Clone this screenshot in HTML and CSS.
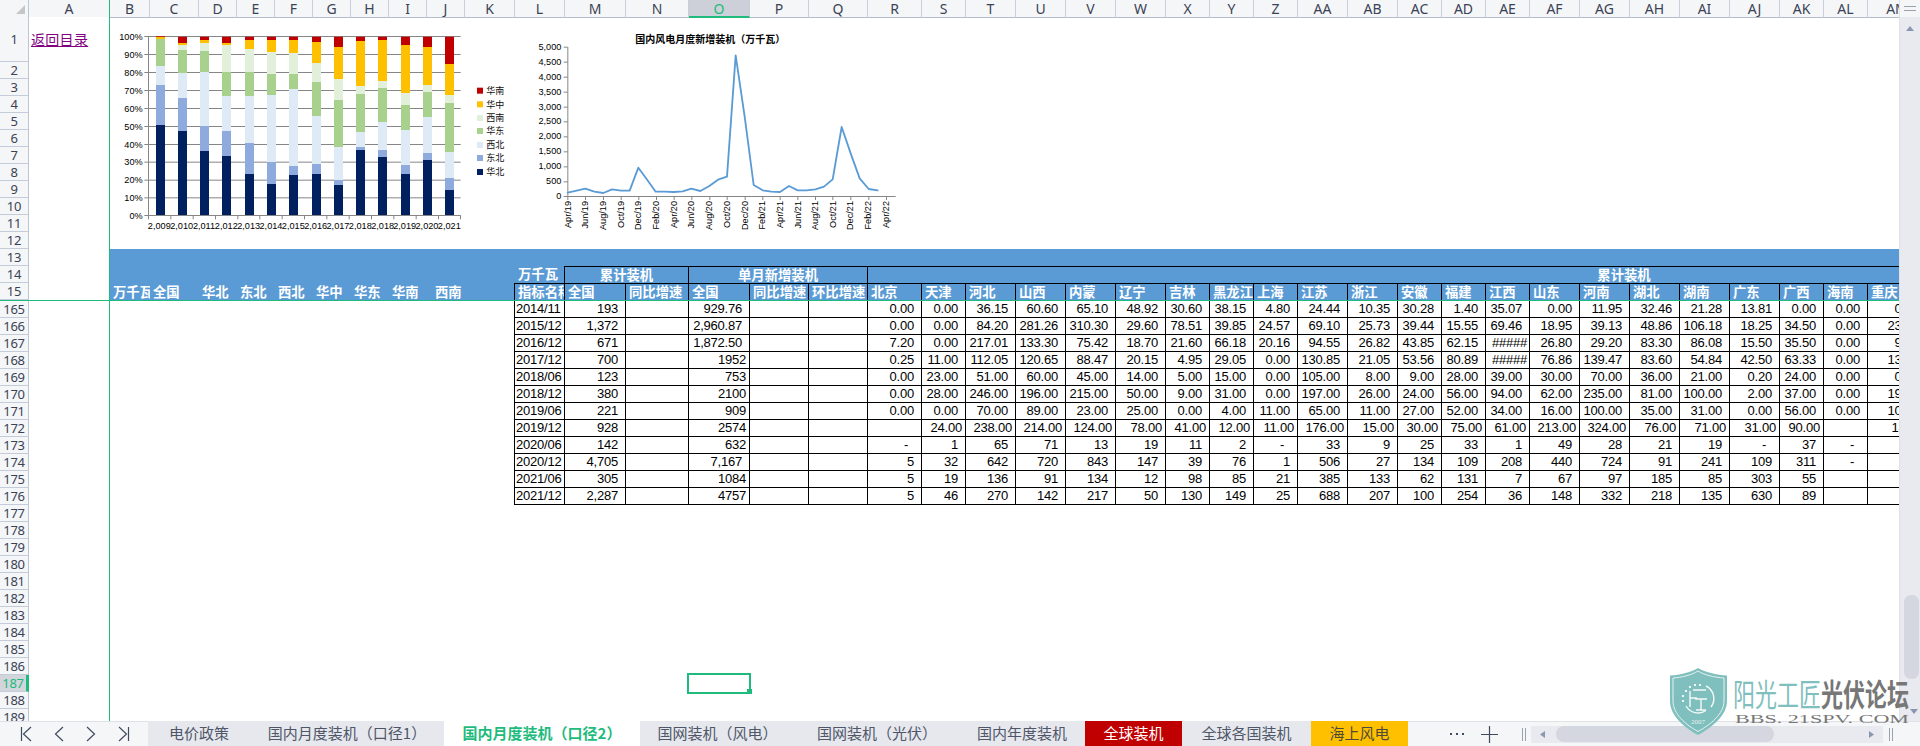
FILE: index.html
```html
<!DOCTYPE html>
<html lang="zh-CN">
<head>
<meta charset="utf-8">
<title>国内月度装机</title>
<link rel="stylesheet" href="styles.css">
</head>
<body>
<div class="workspace">
  <div class="sheet">
    <div class="row colhead">
      <div class="corner"><svg width="29" height="17" viewBox="0 0 29 17"><path class="corner-mark" d="M25 5V14H16Z"/></svg></div>
      <div class="ch cha">A</div><div class="ch">B</div><div class="ch">C</div><div class="ch">D</div><div class="ch">E</div><div class="ch">F</div><div class="ch">G</div><div class="ch">H</div><div class="ch">I</div><div class="ch">J</div><div class="ch">K</div><div class="ch">L</div><div class="ch">M</div><div class="ch">N</div><div class="ch on">O</div><div class="ch">P</div><div class="ch">Q</div><div class="ch">R</div><div class="ch">S</div><div class="ch">T</div><div class="ch">U</div><div class="ch">V</div><div class="ch">W</div><div class="ch">X</div><div class="ch">Y</div><div class="ch">Z</div><div class="ch">AA</div><div class="ch">AB</div><div class="ch">AC</div><div class="ch">AD</div><div class="ch">AE</div><div class="ch">AF</div><div class="ch">AG</div><div class="ch">AH</div><div class="ch">AI</div><div class="ch">AJ</div><div class="ch">AK</div><div class="ch">AL</div><div class="ch">AM</div>
    </div>

    <div class="row tall"><div class="rh">1</div><div class="a"><a class="link" href="#">返回目录</a></div></div>
    <div class="row"><div class="rh">2</div><div class="a"></div></div>
    <div class="row"><div class="rh">3</div><div class="a"></div></div>
    <div class="row"><div class="rh">4</div><div class="a"></div></div>
    <div class="row"><div class="rh">5</div><div class="a"></div></div>
    <div class="row"><div class="rh">6</div><div class="a"></div></div>
    <div class="row"><div class="rh">7</div><div class="a"></div></div>
    <div class="row"><div class="rh">8</div><div class="a"></div></div>
    <div class="row"><div class="rh">9</div><div class="a"></div></div>
    <div class="row"><div class="rh">10</div><div class="a"></div></div>
    <div class="row"><div class="rh">11</div><div class="a"></div></div>
    <div class="row"><div class="rh">12</div><div class="a"></div></div>
    <div class="row band"><div class="rh">13</div><div class="a"></div></div>
    <div class="row band"><div class="rh">14</div><div class="a"></div>
      <div class="h14 l14">万千瓦</div>
      <div class="h14 box cm">累计装机</div>
      <div class="h14 box co">单月新增装机</div>
      <div class="h14 box cr">累计装机</div>
    </div>
    <div class="row band last"><div class="rh">15</div><div class="a"></div>
      <div class="lab">万千瓦</div><div class="lab">全国</div><div class="lab">华北</div><div class="lab">东北</div><div class="lab">西北</div><div class="lab">华中</div><div class="lab">华东</div><div class="lab">华南</div><div class="lab far">西南</div>
      <div class="h15 first">指标名称</div><div class="h15">全国</div><div class="h15">同比增速</div><div class="h15">全国</div><div class="h15">同比增速</div><div class="h15">环比增速</div><div class="h15">北京</div><div class="h15">天津</div><div class="h15">河北</div><div class="h15">山西</div><div class="h15">内蒙</div><div class="h15">辽宁</div><div class="h15">吉林</div><div class="h15">黑龙江</div><div class="h15">上海</div><div class="h15">江苏</div><div class="h15">浙江</div><div class="h15">安徽</div><div class="h15">福建</div><div class="h15">江西</div><div class="h15">山东</div><div class="h15">河南</div><div class="h15">湖北</div><div class="h15">湖南</div><div class="h15">广东</div><div class="h15">广西</div><div class="h15">海南</div><div class="h15">重庆</div>
    </div>

    <div class="row data"><div class="rh">165</div><div class="a"></div><span class="t">2014/11</span><span>193</span><span></span><span>929.76</span><span></span><span></span><span>0.00</span><span>0.00</span><span>36.15</span><span>60.60</span><span>65.10</span><span>48.92</span><span>30.60</span><span>38.15</span><span>4.80</span><span>24.44</span><span>10.35</span><span>30.28</span><span>1.40</span><span>35.07</span><span>0.00</span><span>11.95</span><span>32.46</span><span>21.28</span><span>13.81</span><span>0.00</span><span>0.00</span><span>0.00</span></div>
    <div class="row data"><div class="rh">166</div><div class="a"></div><span class="t">2015/12</span><span>1,372</span><span></span><span>2,960.87</span><span></span><span></span><span>0.00</span><span>0.00</span><span>84.20</span><span>281.26</span><span>310.30</span><span>29.60</span><span>78.51</span><span>39.85</span><span>24.57</span><span>69.10</span><span>25.73</span><span>39.44</span><span>15.55</span><span>69.46</span><span>18.95</span><span>39.13</span><span>48.86</span><span>106.18</span><span>18.25</span><span>34.50</span><span>0.00</span><span>23.10</span></div>
    <div class="row data"><div class="rh">167</div><div class="a"></div><span class="t">2016/12</span><span>671</span><span></span><span>1,872.50</span><span></span><span></span><span>7.20</span><span>0.00</span><span>217.01</span><span>133.30</span><span>75.42</span><span>18.70</span><span>21.60</span><span>66.18</span><span>20.16</span><span>94.55</span><span>26.82</span><span>43.85</span><span>62.15</span><span class="x">#####</span><span>26.80</span><span>29.20</span><span>83.30</span><span>86.08</span><span>15.50</span><span>35.50</span><span>0.00</span><span>9.60</span></div>
    <div class="row data"><div class="rh">168</div><div class="a"></div><span class="t">2017/12</span><span>700</span><span></span><span class="g">1952</span><span></span><span></span><span>0.25</span><span>11.00</span><span>112.05</span><span>120.65</span><span>88.47</span><span>20.15</span><span>4.95</span><span>29.05</span><span>0.00</span><span>130.85</span><span>21.05</span><span>53.56</span><span>80.89</span><span class="x">#####</span><span>76.86</span><span>139.47</span><span>83.60</span><span>54.84</span><span>42.50</span><span>63.33</span><span>0.00</span><span>13.50</span></div>
    <div class="row data"><div class="rh">169</div><div class="a"></div><span class="t">2018/06</span><span>123</span><span></span><span class="g">753</span><span></span><span></span><span>0.00</span><span>23.00</span><span>51.00</span><span>60.00</span><span>45.00</span><span>14.00</span><span>5.00</span><span>15.00</span><span>0.00</span><span>105.00</span><span>8.00</span><span>9.00</span><span>28.00</span><span>39.00</span><span>30.00</span><span>70.00</span><span>36.00</span><span>21.00</span><span>0.20</span><span>24.00</span><span>0.00</span><span>0.00</span></div>
    <div class="row data"><div class="rh">170</div><div class="a"></div><span class="t">2018/12</span><span>380</span><span></span><span class="g">2100</span><span></span><span></span><span>0.00</span><span>28.00</span><span>246.00</span><span>196.00</span><span>215.00</span><span>50.00</span><span>9.00</span><span>31.00</span><span>0.00</span><span>197.00</span><span>26.00</span><span>24.00</span><span>56.00</span><span>94.00</span><span>62.00</span><span>235.00</span><span>81.00</span><span>100.00</span><span>2.00</span><span>37.00</span><span>0.00</span><span>19.00</span></div>
    <div class="row data"><div class="rh">171</div><div class="a"></div><span class="t">2019/06</span><span>221</span><span></span><span class="g">909</span><span></span><span></span><span>0.00</span><span>0.00</span><span>70.00</span><span>89.00</span><span>23.00</span><span>25.00</span><span>0.00</span><span>4.00</span><span>11.00</span><span>65.00</span><span>11.00</span><span>27.00</span><span>52.00</span><span>34.00</span><span>16.00</span><span>100.00</span><span>35.00</span><span>31.00</span><span>0.00</span><span>56.00</span><span>0.00</span><span>10.00</span></div>
    <div class="row data"><div class="rh">172</div><div class="a"></div><span class="t">2019/12</span><span>928</span><span></span><span class="g">2574</span><span></span><span></span><span></span><span class="g">24.00</span><span class="g">238.00</span><span class="g">214.00</span><span class="g">124.00</span><span class="g">78.00</span><span class="g">41.00</span><span class="g">12.00</span><span class="g">11.00</span><span class="g">176.00</span><span class="g">15.00</span><span class="g">30.00</span><span class="g">75.00</span><span class="g">61.00</span><span class="g">213.00</span><span class="g">324.00</span><span class="g">76.00</span><span class="g">71.00</span><span class="g">31.00</span><span class="g">90.00</span><span></span><span class="g">18.00</span></div>
    <div class="row data"><div class="rh">173</div><div class="a"></div><span class="t">2020/06</span><span>142</span><span></span><span class="g">632</span><span></span><span></span><span class="d">-</span><span>1</span><span>65</span><span>71</span><span>13</span><span>19</span><span>11</span><span>2</span><span class="d">-</span><span>33</span><span>9</span><span>25</span><span>33</span><span>1</span><span>49</span><span>28</span><span>21</span><span>19</span><span class="d">-</span><span>37</span><span class="d">-</span><span></span></div>
    <div class="row data"><div class="rh">174</div><div class="a"></div><span class="t">2020/12</span><span>4,705</span><span></span><span>7,167</span><span></span><span></span><span>5</span><span>32</span><span>642</span><span>720</span><span>843</span><span>147</span><span>39</span><span>76</span><span>1</span><span>506</span><span>27</span><span>134</span><span>109</span><span>208</span><span>440</span><span>724</span><span>91</span><span>241</span><span>109</span><span>311</span><span class="d">-</span><span></span></div>
    <div class="row data"><div class="rh">175</div><div class="a"></div><span class="t">2021/06</span><span>305</span><span></span><span class="g">1084</span><span></span><span></span><span>5</span><span>19</span><span>136</span><span>91</span><span>134</span><span>12</span><span>98</span><span>85</span><span>21</span><span>385</span><span>133</span><span>62</span><span>131</span><span>7</span><span>67</span><span>97</span><span>185</span><span>85</span><span>303</span><span>55</span><span></span><span></span></div>
    <div class="row data"><div class="rh">176</div><div class="a"></div><span class="t">2021/12</span><span>2,287</span><span></span><span class="g">4757</span><span></span><span></span><span>5</span><span>46</span><span>270</span><span>142</span><span>217</span><span>50</span><span>130</span><span>149</span><span>25</span><span>688</span><span>207</span><span>100</span><span>254</span><span>36</span><span>148</span><span>332</span><span>218</span><span>135</span><span>630</span><span>89</span><span></span><span></span></div>

    <div class="row"><div class="rh">177</div><div class="a"></div></div>
    <div class="row"><div class="rh">178</div><div class="a"></div></div>
    <div class="row"><div class="rh">179</div><div class="a"></div></div>
    <div class="row"><div class="rh">180</div><div class="a"></div></div>
    <div class="row"><div class="rh">181</div><div class="a"></div></div>
    <div class="row"><div class="rh">182</div><div class="a"></div></div>
    <div class="row"><div class="rh">183</div><div class="a"></div></div>
    <div class="row"><div class="rh">184</div><div class="a"></div></div>
    <div class="row"><div class="rh">185</div><div class="a"></div></div>
    <div class="row"><div class="rh">186</div><div class="a"></div></div>
    <div class="row"><div class="rh on">187</div><div class="a"></div><div class="sel"></div></div>
    <div class="row"><div class="rh">188</div><div class="a"></div></div>
    <div class="row"><div class="rh">189</div><div class="a"></div></div>

    <svg class="chart chart-bar" width="420" height="220" viewBox="0 0 1260 660">
      <path class="grid" d="M145 49.5H1082M145 103.5H1082M145 157.5H1082M145 211.5H1082M145 265.5H1082M145 319.5H1082M145 373.5H1082M145 426.5H1082M145 480.5H1082M145 533.5H1082"/>
      <path class="navy" d="M168 315h27V586h-27zM234 333h27V586h-27zM300 393h27V586h-27zM366 408h27V586h-27zM435 462h27V586h-27zM501 492h27V586h-27zM567 465h27V586h-27zM636 462h27V586h-27zM702 495h27V586h-27zM768 390h27V586h-27zM834 411h27V586h-27zM903 462h27V586h-27zM969 420h27V586h-27zM1035 510h27V586h-27z"/>
      <path class="blue" d="M168 195h27V315h-27zM234 234h27V333h-27zM300 318h27V393h-27zM366 333h27V408h-27zM435 369h27V462h-27zM501 426h27V492h-27zM567 438h27V465h-27zM636 432h27V462h-27zM702 480h27V495h-27zM768 381h27V390h-27zM834 390h27V411h-27zM903 435h27V462h-27zM969 399h27V420h-27zM1035 474h27V510h-27z"/>
      <path class="lb" d="M168 138h27V195h-27zM234 159h27V234h-27zM300 156h27V318h-27zM366 228h27V333h-27zM435 228h27V369h-27zM501 225h27V426h-27zM567 207h27V438h-27zM636 288h27V432h-27zM702 381h27V480h-27zM768 336h27V381h-27zM834 306h27V390h-27zM903 330h27V435h-27zM969 291h27V399h-27zM1035 396h27V474h-27z"/>
      <path class="green" d="M168 57h27V138h-27zM234 90h27V159h-27zM300 93h27V156h-27zM366 156h27V228h-27zM435 156h27V228h-27zM501 162h27V225h-27zM567 162h27V207h-27zM636 186h27V288h-27zM702 240h27V381h-27zM768 222h27V336h-27zM834 204h27V306h-27zM903 255h27V330h-27zM969 216h27V291h-27zM1035 249h27V396h-27z"/>
      <path class="pale" d="M234 75h27V90h-27zM300 69h27V93h-27zM366 75h27V156h-27zM435 87h27V156h-27zM501 96h27V162h-27zM567 99h27V162h-27zM636 129h27V186h-27zM702 177h27V240h-27zM768 198h27V222h-27zM834 183h27V204h-27zM903 219h27V255h-27zM969 195h27V216h-27zM1035 225h27V249h-27z"/>
      <path class="gold" d="M168 50h27V57h-27zM234 69h27V75h-27zM300 60h27V69h-27zM366 69h27V75h-27zM435 60h27V87h-27zM501 60h27V96h-27zM567 60h27V99h-27zM636 66h27V129h-27zM702 81h27V177h-27zM768 63h27V198h-27zM834 60h27V183h-27zM903 75h27V219h-27zM969 81h27V195h-27zM1035 132h27V225h-27z"/>
      <path class="crim" d="M168 48h27V50h-27zM234 50h27V69h-27zM300 50h27V60h-27zM366 50h27V69h-27zM435 50h27V60h-27zM501 50h27V60h-27zM567 50h27V60h-27zM636 50h27V66h-27zM702 50h27V81h-27zM768 50h27V63h-27zM834 50h27V60h-27zM903 50h27V75h-27zM969 50h27V81h-27zM1035 50h27V132h-27z"/>
      <path class="grid" d="M145.5 48V598M133 49.5H145M133 103.5H145M133 157.5H145M133 211.5H145M133 265.5H145M133 319.5H145M133 373.5H145M133 426.5H145M133 480.5H145M133 533.5H145M133 586.5H1082M212.5 586V598M279.5 586V598M346.5 586V598M413.5 586V598M479.5 586V598M546.5 586V598M613.5 586V598M680.5 586V598M747.5 586V598M814.5 586V598M881.5 586V598M948.5 586V598M1015.5 586V598M1081.5 586V598"/>
      <g class="ax ax-r">
        <text x="128" y="60">100%</text><text x="128" y="114">90%</text><text x="128" y="168">80%</text><text x="128" y="221">70%</text><text x="128" y="275">60%</text><text x="128" y="329">50%</text><text x="128" y="383">40%</text><text x="128" y="435">30%</text><text x="128" y="489">20%</text><text x="128" y="543">10%</text><text x="128" y="596">0%</text>
      </g>
      <g class="ax ax-m">
        <text x="178" y="626">2,009</text><text x="245" y="626">2,010</text><text x="312" y="626">2,011</text><text x="379" y="626">2,012</text><text x="446" y="626">2,013</text><text x="513" y="626">2,014</text><text x="580" y="626">2,015</text><text x="647" y="626">2,016</text><text x="714" y="626">2,017</text><text x="781" y="626">2,018</text><text x="848" y="626">2,018</text><text x="914" y="626">2,019</text><text x="981" y="626">2,020</text><text x="1048" y="626">2,021</text>
      </g>
      <rect class="crim" x="1131" y="203" width="18" height="18"/><text class="leg" x="1159" y="222">华南</text>
      <rect class="gold" x="1131" y="244" width="18" height="18"/><text class="leg" x="1159" y="263">华中</text>
      <rect class="pale" x="1131" y="285" width="18" height="18"/><text class="leg" x="1159" y="304">西南</text>
      <rect class="green" x="1131" y="324" width="18" height="18"/><text class="leg" x="1159" y="343">华东</text>
      <rect class="lb" x="1131" y="366" width="18" height="18"/><text class="leg" x="1159" y="385">西北</text>
      <rect class="blue" x="1131" y="405" width="18" height="18"/><text class="leg" x="1159" y="424">东北</text>
      <rect class="navy" x="1131" y="447" width="18" height="18"/><text class="leg" x="1159" y="466">华北</text>
    </svg>

    <svg class="chart chart-line" width="520" height="240" viewBox="0 0 1560 720">
      <text class="title" x="406" y="130">国内风电月度新增装机（万千瓦）</text>
      <path class="grid" d="M203.5 141V600M191 141.5H203M191 186.5H203M191 231.5H203M191 276.5H203M191 321.5H203M191 365.5H203M191 410.5H203M191 455.5H203M191 500.5H203M191 545.5H203M191 589.5H1187M256.5 589V600M310.5 589V600M363.5 589V600M416.5 589V600M469.5 589V600M522.5 589V600M575.5 589V600M629.5 589V600M681.5 589V600M735.5 589V600M788.5 589V600M840.5 589V600M893.5 589V600M946.5 589V600M998.5 589V600M1052.5 589V600M1106.5 589V600M1159.5 589V600"/>
      <polyline class="wind" points="203,578 230,572 256,566 283,575 310,579 336,568 363,572 389,572 415,503 442,540 467,575 494,575 521,576 548,574 574,566 601,573 628,558 654,539 681,530 707,166 734,350 761,555 788,571 814,575 840,576 867,558 893,571 920,571 946,568 972,560 998,538 1025,381 1052,460 1079,535 1106,567 1133,571"/>
      <g class="ax ax-r">
        <text x="184" y="149">5,000</text><text x="184" y="194">4,500</text><text x="184" y="239">4,000</text><text x="184" y="284">3,500</text><text x="184" y="329">3,000</text><text x="184" y="371">2,500</text><text x="184" y="416">2,000</text><text x="184" y="461">1,500</text><text x="184" y="506">1,000</text><text x="184" y="551">500</text><text x="184" y="596">0</text>
      </g>
      <g class="ax ax-e">
        <text transform="translate(212,603) rotate(-90)">Apr/19</text><text transform="translate(265,603) rotate(-90)">Jun/19</text><text transform="translate(319,603) rotate(-90)">Aug/19</text><text transform="translate(372,603) rotate(-90)">Oct/19</text><text transform="translate(424,603) rotate(-90)">Dec/19</text><text transform="translate(477,603) rotate(-90)">Feb/20</text><text transform="translate(531,603) rotate(-90)">Apr/20</text><text transform="translate(583,603) rotate(-90)">Jun/20</text><text transform="translate(637,603) rotate(-90)">Aug/20</text><text transform="translate(690,603) rotate(-90)">Oct/20</text><text transform="translate(743,603) rotate(-90)">Dec/20</text><text transform="translate(796,603) rotate(-90)">Feb/21</text><text transform="translate(849,603) rotate(-90)">Apr/21</text><text transform="translate(902,603) rotate(-90)">Jun/21</text><text transform="translate(955,603) rotate(-90)">Aug/21</text><text transform="translate(1007,603) rotate(-90)">Oct/21</text><text transform="translate(1060,603) rotate(-90)">Dec/21</text><text transform="translate(1113,603) rotate(-90)">Feb/22</text><text transform="translate(1167,603) rotate(-90)">Apr/22</text>
      </g>
    </svg>
  </div>

  <div class="vscroll">
    <div class="vs-head"><svg width="12" height="6" viewBox="0 0 12 6"><path class="hair" d="M0 .5H12M0 4.500H12"/></svg></div>
    <div class="vs-up"><svg width="8" height="5" viewBox="0 0 8 5"><path class="tri" d="M4 0L8 5H0Z"/></svg></div>
    <div class="vs-thumb"></div>
    <div class="vs-down"><svg width="8" height="5" viewBox="0 0 8 5"><path class="tri" d="M0 0H8L4 5Z"/></svg></div>
  </div>
</div>

<div class="tabbar">
  <div class="tabnav">
    <svg width="12" height="16" viewBox="0 0 12 16"><path class="nav" d="M1.500 1V15M11 1L3.500 8L11 15"/></svg>
    <svg width="10" height="16" viewBox="0 0 10 16"><path class="nav" d="M9 1L1.500 8L9 15"/></svg>
    <svg width="10" height="16" viewBox="0 0 10 16"><path class="nav" d="M1 1L8.500 8L1 15"/></svg>
    <svg width="12" height="16" viewBox="0 0 12 16"><path class="nav" d="M10.500 1V15M1 1L8.500 8L1 15"/></svg>
  </div>
  <div class="tab">电价政策</div>
  <div class="tab">国内月度装机（口径1）</div>
  <div class="tab active">国内月度装机（口径2）</div>
  <div class="tab">国网装机（风电）</div>
  <div class="tab">国网装机（光伏）</div>
  <div class="tab">国内年度装机</div>
  <div class="tab red">全球装机</div>
  <div class="tab">全球各国装机</div>
  <div class="tab gold-tab">海上风电</div>
  <div class="tabtools">
    <svg class="more" width="16" height="4" viewBox="0 0 16 4"><path class="dots" d="M1 1h2v2H1zM7 1h2v2H7zM13 1h2v2h-2z"/></svg>
    <svg class="plus" width="17" height="17" viewBox="0 0 17 17"><path class="nav" d="M8.500 0V17M0 8.500H17"/></svg>
    <svg class="split" width="4" height="13" viewBox="0 0 4 13"><path class="hair" d="M.5 0V13M3.500 0V13"/></svg>
    <div class="hscroll">
      <svg width="5" height="7" viewBox="0 0 5 7"><path class="tri" d="M5 0V7L0 3.500Z"/></svg>
      <div class="hs-thumb"></div>
      <svg class="hs-right" width="5" height="7" viewBox="0 0 5 7"><path class="tri" d="M0 0V7L5 3.500Z"/></svg>
    </div>
    <svg class="split" width="4" height="13" viewBox="0 0 4 13"><path class="hair" d="M.5 0V13M3.500 0V13"/></svg>
  </div>
</div>

<svg class="watermark" width="255" height="86" viewBox="0 0 255 86">
  <path class="wm-shield" d="M33 8C27 12 15 15 5 15.500V41C5 56 20 68 33 75C46 68 62 56 62 41V15.500C52 15 39 12 33 8Z"/>
  <path class="wm-edge" d="M33 11C27 15 16 17.500 8 18V41C8 54 21 65 33 71.500C45 65 59 54 59 41V18C50 17.500 39 15 33 11Z"/>
  <path class="wm-ring" d="M41 26A14 14 0 0 1 46 47M41 50.500A14 14 0 0 1 21 46"/>
  <path class="wm-dots" d="M20 30h2v2h-2zM24 26h2v2h-2zM29 24h2v2h-2zM34 24h2v2h-2zM17 35h2v2h-2zM17 40h2v2h-2z"/>
  <path class="wm-ring" d="M28 30H41M25 31V47M25 38H32M30 39H42M36 39V50M31 50H41"/>
  <text class="wm-year" x="33" y="64" text-anchor="middle">2007</text>
  <text class="wm-cjk wm-teal" transform="translate(68,46) scale(1,1.4)" textLength="88">阳光工匠</text>
  <text class="wm-cjk wm-gray" transform="translate(156,46) scale(1,1.4)" textLength="88">光伏论坛</text>
  <text class="wm-url" x="70" y="63" textLength="174" lengthAdjust="spacingAndGlyphs">BBS. 21SPV. COM</text>
</svg>
</body>
</html>
```

FILE: styles.css
```css
* { box-sizing: border-box; }
html, body { margin: 0; height: 100%; overflow: hidden; background: #fff; }
body {
  display: flex;
  flex-direction: column;
  font-family: "Liberation Sans", "Noto Sans CJK SC", sans-serif;
  color: #000;
  position: relative;
}

.workspace { flex: 1; min-height: 0; display: flex; }
.sheet {
  --cols: 29px 81px 40px 49px 38px 38px 38px 38px 38px 38px 38px 50px 50px 61px 63px 61px 59px 59px 54px 44px 50px 50px 50px 50px 44px 44px 44px 50px 50px 44px 44px 44px 50px 50px 50px 50px 50px 44px 44px 59px 454px;
  flex: 1;
  min-width: 0;
  overflow: hidden;
  position: relative;
}

.row {
  display: grid;
  grid-template-columns: var(--cols);
  grid-auto-rows: 1fr;
  width: 2381px;
  height: 17px;
}
.row.tall { height: 45px; }

/* column letters */
.colhead { height: 17px; background: #f5f6f8; }
.corner { border-right: 1px solid #bcc5d4; border-bottom: 1px solid #b4bccb; }
.corner svg { display: block; }
.corner-mark { fill: #c4c6ca; }
.ch {
  font: 14px/17px "Noto Sans", sans-serif;
  color: #3a4355;
  text-align: center;
  border-right: 1px solid #c8cedb;
  border-bottom: 1px solid #b4bccb;
  overflow: hidden;
}
.ch.cha { border-right-color: #1fbb7d; }
.ch.on { background: #cdd0d8; color: #1fbb7d; border-bottom: 2px solid #1fbb7d; border-right-color: #cdd0d8; }

/* row numbers and the frozen column */
.rh {
  font: 13px/16px "Noto Sans", sans-serif;
  letter-spacing: -.3px;
  color: #3a4355;
  text-align: center;
  background: #f5f6f8;
  border-right: 1px solid #bcc5d4;
  border-bottom: 1px solid #c4ccda;
  display: flex;
  align-items: center;
  justify-content: center;
}
.rh.on { background: #d2d5db; color: #1fbb7d; border-right: 3px solid #1fbb7d; }
.a {
  background: #fff;
  border-right: 1px solid #1fbb7d;
  display: flex;
  align-items: center;
  padding: 0 0 2px 2px;
}
.link {
  font: 14px/18px "Noto Sans CJK SC", sans-serif;
  letter-spacing: .3px;
  color: #800080;
  text-decoration: underline;
}

/* blue header band */
.band { background: #5b9bd5; }
.band.last { height: 18px; border-bottom: 1px solid #1fbb7d; }
.band.last .a { background: #fff; }
.h14, .h15, .lab {
  font: 700 13.33px/16px "Noto Sans CJK SC", sans-serif;
  color: #fff;
  white-space: nowrap;
  overflow: hidden;
}
.lab { padding: 1px 0 0 3px; }
.lab.far { padding-left: 8px; }
.h14 { line-height: 16px; }
.l14 { grid-column: 13; padding-left: 3px; border-right: 1px solid #000; }
.box { border-top: 1px solid #000; border-right: 1px solid #000; text-align: center; }
.cm { grid-column: 14 / span 2; }
.co { grid-column: 16 / span 3; }
.cr { grid-column: 19 / 42; }
.h15 { border-top: 1px solid #000; border-right: 1px solid #000; padding-left: 3px; line-height: 15px; }
.h15.first { grid-column: 13; border-left: 1px solid #000; margin-left: -1px; }

/* data table */
.data span {
  font-size: 13px;
  letter-spacing: -.23px;
  line-height: 15px;
  text-align: right;
  white-space: nowrap;
  overflow: hidden;
  padding: 0 7px 0 0;
  background: #fff;
  border-right: 1px solid #000;
  border-bottom: 1px solid #000;
}
.data .t { grid-column: 13; text-align: left; padding: 0 0 0 1px; border-left: 1px solid #000; margin-left: -1px; }
.data .g { padding-right: 3px; }
.data .d { padding-right: 13px; }
.data .x { padding-right: 2px; }

/* selected cell */
.sel {
  grid-column: 16;
  position: relative;
  margin-right: 1px;
  outline: 2px solid #1fbb7d;
}
.sel::after {
  content: "";
  position: absolute;
  right: -3px;
  bottom: -2px;
  width: 5px;
  height: 5px;
  background: #1fbb7d;
}

/* charts float over the cells */
.chart { position: absolute; display: block; }
.chart-bar { left: 100px; top: 20px; }
.chart-line { left: 500px; top: 0; }
.chart .grid { fill: none; stroke: #868686; stroke-width: 3; }
.navy { fill: #002060; }
.blue { fill: #8faadc; }
.lb { fill: #deebf7; }
.green { fill: #a9d18e; }
.pale { fill: #e2efda; }
.gold { fill: #ffc000; }
.crim { fill: #c00000; }
.ax text { font-family: "Liberation Sans", sans-serif; font-size: 27.500px; fill: #000; }
.ax-r text { text-anchor: end; }
.ax-m text { text-anchor: middle; }
.ax-e text { text-anchor: end; }
.leg { font-family: "Noto Sans CJK SC", sans-serif; font-size: 27px; fill: #111; }
.title { font-family: "Noto Sans CJK SC", sans-serif; font-size: 30px; font-weight: 700; fill: #000; }
.wind { fill: none; stroke: #5b9bd5; stroke-width: 5.500; stroke-linejoin: round; stroke-linecap: round; }

/* vertical scroll bar */
.vscroll {
  width: 21px;
  flex: none;
  background: #e8eaf0;
  border-left: 1px solid #dfe1e6;
  display: flex;
  flex-direction: column;
  align-items: center;
}
.vs-head { width: 100%; height: 17px; flex: none; background: #f5f6f8; display: flex; align-items: center; justify-content: center; }
.vs-up { height: 16px; flex: none; padding-top: 9px; display: flex; }
.vs-thumb { width: 15px; height: 84px; margin-top: 562px; margin-left: 3px; background: #d4d7df; border-radius: 7px; flex: none; }
.vs-down { margin-top: 30px; margin-left: 8px; display: flex; flex: none; }
.hair { fill: none; stroke: #9aa2b2; stroke-width: 1; }
.tri { fill: #8a97b0; }

/* sheet tabs */
.tabbar {
  height: 25px;
  flex: none;
  display: grid;
  grid-template-columns: 148px 102px 194px 196px 155px 164px 126px 97px 129px 97px 1fr;
  background: #f5f6f8;
}
.tabnav {
  border-top: 1px solid #dfe1e6;
  display: flex;
  align-items: center;
  padding-left: 20px;
}
.tabnav svg { flex: none; margin-right: 22px; }
.nav { fill: none; stroke: #3f4a60; stroke-width: 1.200; }
.tab {
  background: #e6e8ee;
  color: #4e5668;
  font: 15px/24px "Noto Sans CJK SC", sans-serif;
  text-align: center;
  white-space: nowrap;
  overflow: hidden;
}
.tab.active { background: #fff; color: #1fbb7d; font-weight: 700; }
.tab.red { background: #c00000; color: #fff; }
.tab.gold-tab { background: #ffc000; color: #4e4a3a; }
.tabtools {
  border-top: 1px solid #dfe1e6;
  display: flex;
  align-items: center;
  padding-left: 41px;
}
.more { flex: none; }
.dots { fill: #3f4a60; }
.plus { flex: none; margin-left: 16px; }
.split { flex: none; margin-left: 24px; }
.hscroll {
  flex: none;
  width: 352px;
  height: 17px;
  margin-left: 5px;
  background: #e8eaf0;
  display: flex;
  align-items: center;
  padding: 0 9px;
}
.hs-thumb { width: 218px; height: 16px; background: #d4d7df; border-radius: 8px; margin-left: 11px; }
.hs-right { margin-left: auto; }
.hscroll + .split { margin-left: 6px; }

/* watermark laid over the corner of the window */
.watermark { position: absolute; right: 0; bottom: 0; }
.wm-shield { fill: #7fbfbd; }
.wm-edge { fill: none; stroke: #e6f3f2; stroke-width: 1; }
.wm-ring { fill: none; stroke: #f2f9f8; stroke-width: 1.400; }
.wm-dots { fill: #f2f9f8; }
.wm-year { font-family: "Liberation Serif", serif; font-size: 7px; fill: #e6f3f2; }
.wm-cjk { font-family: "Noto Sans CJK SC", sans-serif; font-size: 22px; }
.wm-teal { fill: #7fc0be; }
.wm-gray { fill: #777; font-weight: 700; }
.wm-url { font-family: "Liberation Serif", serif; font-size: 12px; fill: #777; }
```
